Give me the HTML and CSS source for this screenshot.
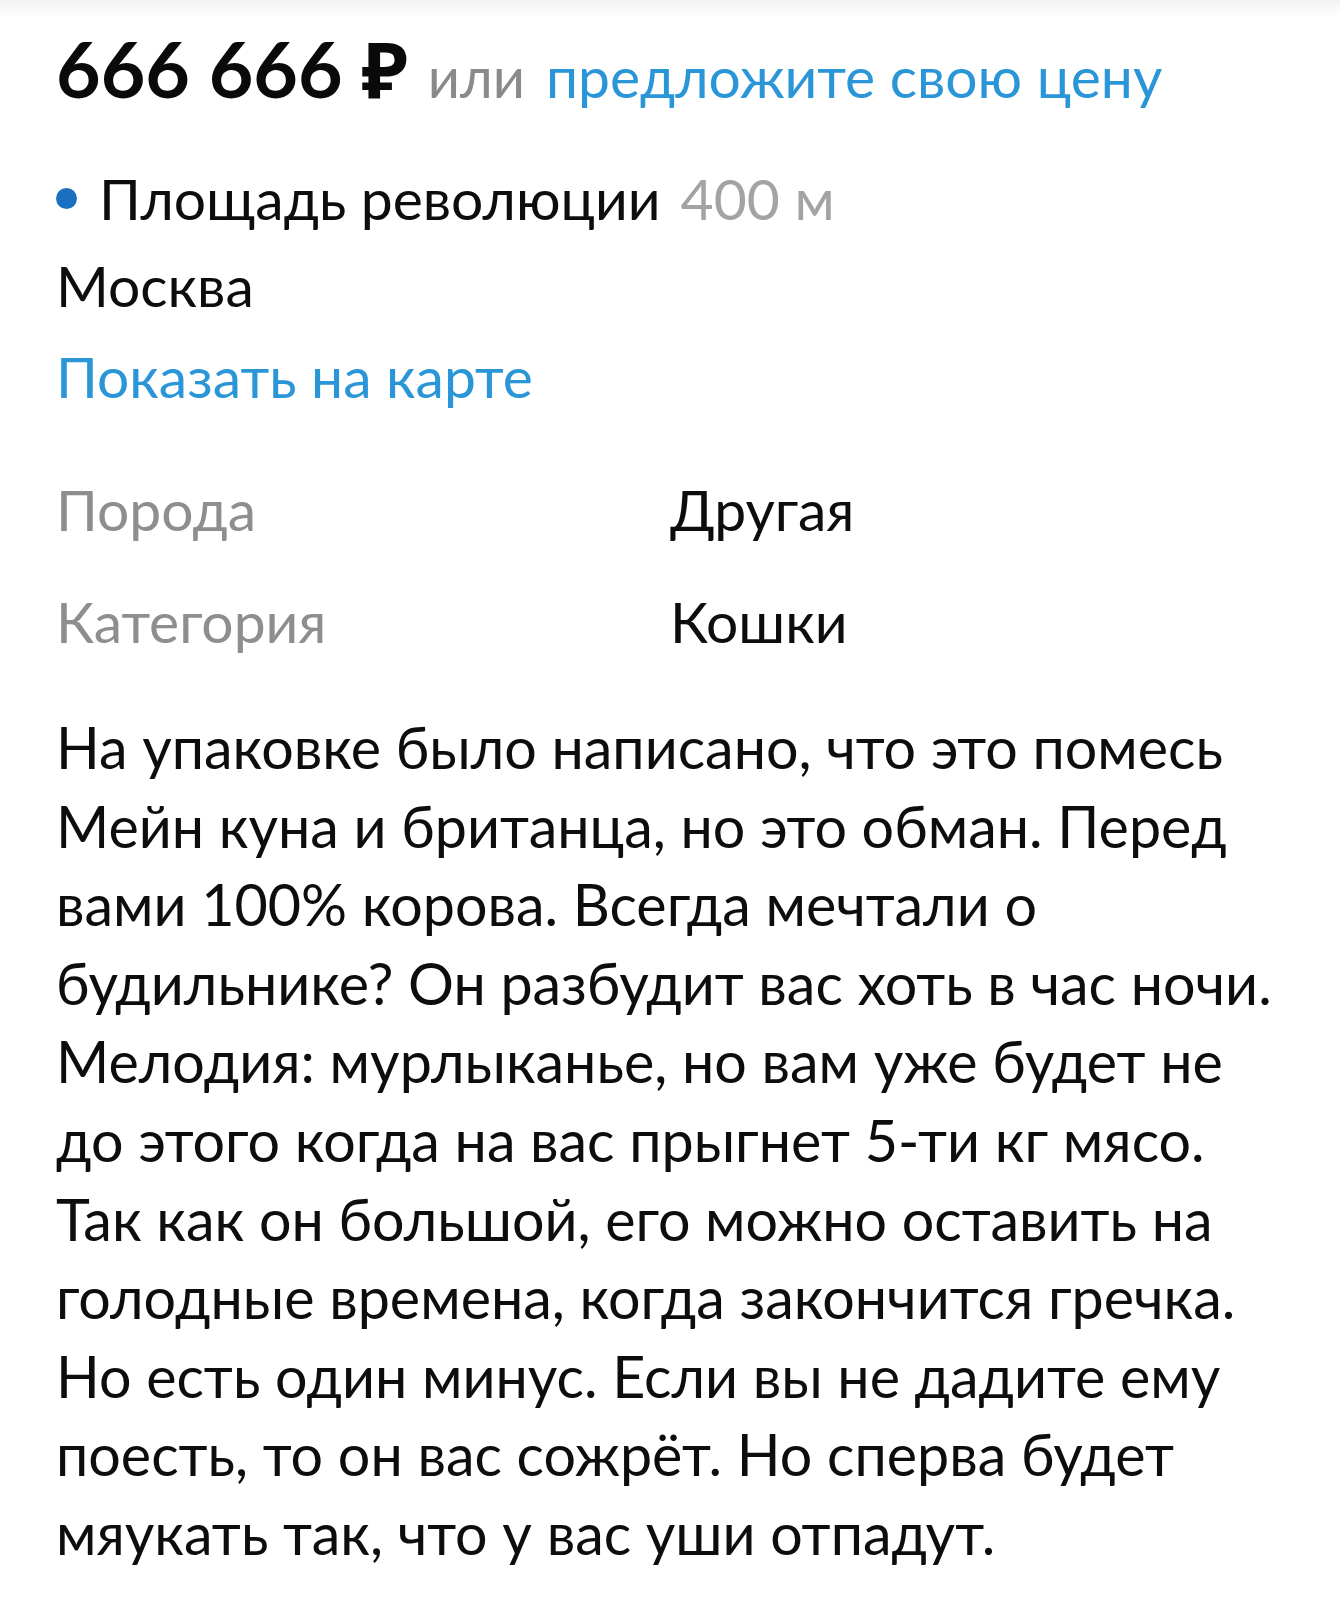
FILE: index.html
```html
<!DOCTYPE html>
<html lang="ru">
<head>
<meta charset="utf-8">
<title>Объявление</title>
<link rel="stylesheet" href="styles.css">
</head>
<body>
<div class="topbar"></div>
<main class="card">
  <div class="price-row">
    <span class="price">666 666 ₽</span>
    <span class="or">или</span>
    <a class="offer" href="#">предложите свою цену</a>
  </div>
  <div class="address">
    <div class="metro"><span class="dot"></span><span class="station">Площадь революции</span><span class="dist">400 м</span></div>
    <div class="city">Москва</div>
    <a class="map-link" href="#">Показать на карте</a>
  </div>
  <dl class="params">
    <div class="param"><dt>Порода</dt><dd>Другая</dd></div>
    <div class="param"><dt>Категория</dt><dd>Кошки</dd></div>
  </dl>
  <p class="desc">На упаковке было написано, что это помесь Мейн куна и британца, но это обман. Перед вами 100% корова. Всегда мечтали о будильнике? Он разбудит вас хоть в час ночи. Мелодия: мурлыканье, но вам уже будет не до этого когда на вас прыгнет 5-ти кг мясо. Так как он большой, его можно оставить на голодные времена, когда закончится гречка. Но есть один минус. Если вы не дадите ему поесть, то он вас сожрёт. Но сперва будет мяукать так, что у вас уши отпадут.</p>
</main>
</body>
</html>
```
FILE: styles.css
```css
html, body {
  margin: 0;
  padding: 0;
  background: #fff;
}
body {
  font-family: Lato, "Open Sans", "Noto Sans", sans-serif;
  color: #0d0d0d;
}
.topbar {
  height: 18px;
  background: linear-gradient(#f3f3f3, #ffffff);
}
.card {
  padding: 0 54px 0 56px;
}
.price-row {
  line-height: 100px;
  white-space: nowrap;
}
.price {
  font-size: 77px;
  font-weight: 700;
  color: #0a0a0a;
  margin-right: 16px;
}
.or {
  font-size: 56px;
  color: #8a8a8a;
  margin-right: 17px;
}
.offer {
  font-size: 57px;
  color: #2a95d7;
  text-decoration: none;
}
.address {
  margin-top: 13px;
  font-size: 57px;
  line-height: 87px;
}
.metro {
  display: flex;
  align-items: center;
}
.dot {
  width: 21px;
  height: 21px;
  border-radius: 50%;
  background: #1b6fc0;
  margin-right: 22px;
}
.dist {
  color: #a3a3a3;
  margin-left: 20px;
}
.city {
  color: #0d0d0d;
}
.map-link {
  display: block;
  margin-top: 4px;
  color: #2a95d7;
  text-decoration: none;
}
.params {
  margin: 33px 0 0;
  font-size: 57px;
  line-height: 112px;
}
.param {
  display: grid;
  grid-template-columns: 614px 1fr;
}
.param dt {
  color: #8e8e8e;
}
.param dd {
  margin: 0;
  color: #0d0d0d;
}
.desc {
  margin: 31px 0 0;
  font-size: 57.4px;
  line-height: 78.6px;
  color: #0d0d0d;
}
```
